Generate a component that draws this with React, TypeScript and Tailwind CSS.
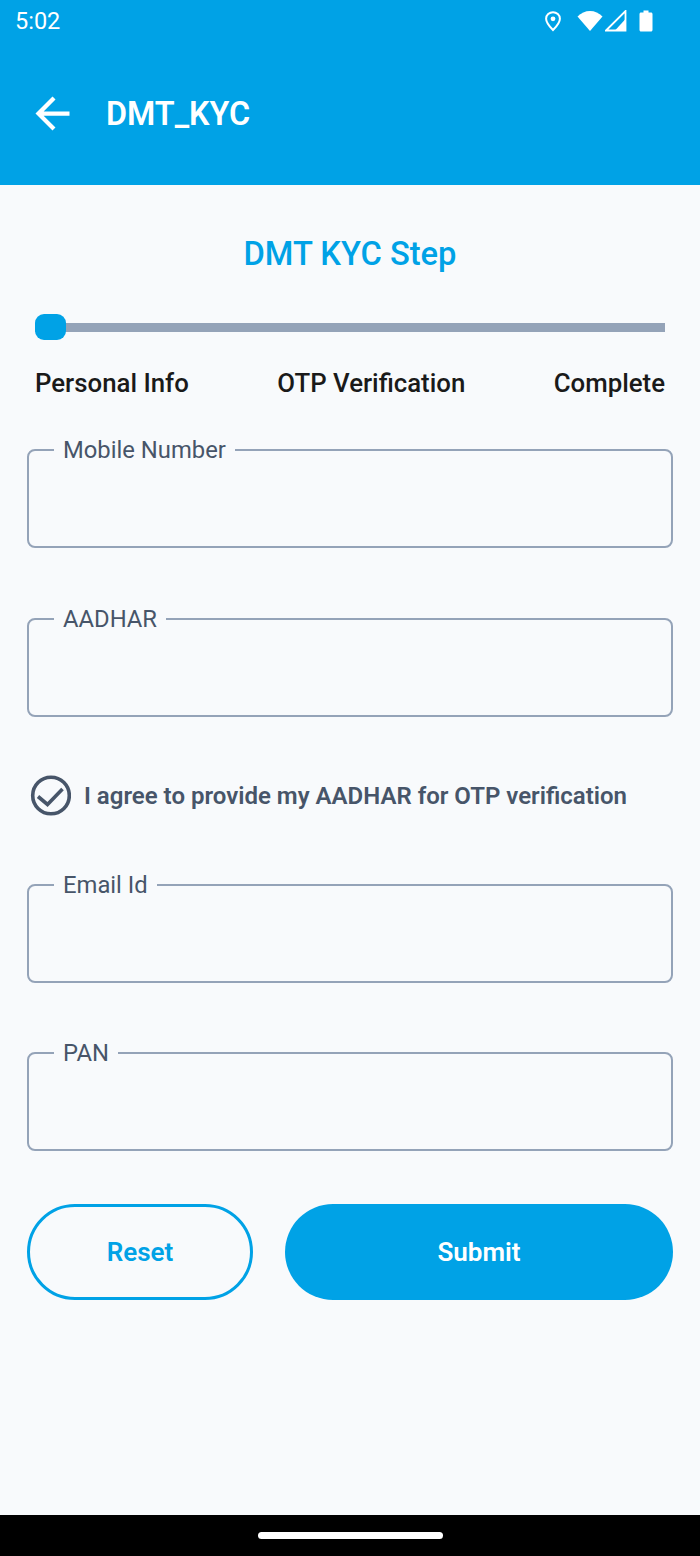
import { MdArrowBack } from 'react-icons/md';

function Field({ label }: { label: string }) {
  return (
    <div className="relative h-[99px] rounded-[8px] border-2 border-[#94a3b8]">
      <span className="absolute left-[25px] top-[-17px] bg-[#f8fafc] px-[9px] text-[23.800px] leading-[32px] text-[#475569]">
        {label}
      </span>
    </div>
  );
}

function StatusIcons() {
  return (
    <div className="flex items-center text-white">
      <svg width="20" height="24" viewBox="0 0 20 24" fill="none" className="mr-[14px]">
        <path d="M10 3.2c-3.6 0-6.900 2.800-6.900 6.500 0 4.400 6.900 11.300 6.900 11.300s6.900-6.900 6.900-11.300c0-3.700-3.300-6.500-6.900-6.500z" stroke="currentColor" strokeWidth="2" />
        <circle cx="10" cy="9.800" r="2.400" fill="currentColor" />
      </svg>
      <svg width="26" height="22" viewBox="0 0 26 22" fill="currentColor" className="mr-[2px]">
        <path d="M0.5 6.5C4 3 8.300 1 13 1s9 2 12.500 5.500L13 21z" />
      </svg>
      <svg width="22" height="22" viewBox="0 0 22 22" fill="none" className="mr-[12px]">
        <path d="M1 20.500L20.500 1v19.500z" stroke="currentColor" strokeWidth="1.800" />
        <path d="M10 20.500L20.500 9v11.500z" fill="currentColor" />
      </svg>
      <svg width="14" height="22" viewBox="0 0 14 22" fill="currentColor">
        <path d="M4.500 0.500h5v2h2.500c.8 0 1.500.7 1.500 1.500v16c0 .8-.7 1.500-1.500 1.500H2c-.8 0-1.500-.7-1.500-1.500V4c0-.8.7-1.500 1.500-1.500h2.500z" />
      </svg>
    </div>
  );
}

export default function App() {
  return (
    <div className="flex h-[1556px] w-[700px] flex-col overflow-hidden bg-[#f8fafc] font-['Roboto',sans-serif]">
      <header className="h-[185px] shrink-0 bg-[#00a2e6] text-white">
        <div className="flex h-[42px] items-center justify-between pl-[15px] pr-[47px]">
          <span className="text-[23.500px] leading-[42px]">5:02</span>
          <StatusIcons />
        </div>
        <div className="flex h-[143px] items-center pb-[1px] pl-[27px]">
          <MdArrowBack size={51} />
          <h1 className="ml-[28px] pt-[1px] text-[32.300px] font-semibold leading-[40px]">DMT_KYC</h1>
        </div>
      </header>

      <main className="flex-1 px-[27px]">
        <h2 className="mt-[49px] text-center text-[32.700px] font-medium leading-[40px] text-[#00a2e6]">DMT KYC Step</h2>

        <div className="relative mx-[8px] mt-[49px] h-[9px] bg-[#94a3b8]">
          <div className="absolute left-0 top-[-9px] h-[26px] w-[31px] rounded-[9px] bg-[#00a2e6]" />
        </div>

        <div className="mx-[8px] mt-[35px] flex justify-between text-[25.800px] font-medium leading-[32px] text-[#1a1a1a]">
          <span>Personal Info</span>
          <span>OTP Verification</span>
          <span>Complete</span>
        </div>

        <div className="mt-[50px] flex flex-col">
          <Field label="Mobile Number" />
          <div className="mt-[70px]">
            <Field label="AADHAR" />
          </div>

          <div className="ml-[3px] mt-[58px] flex items-center">
            <svg width="41" height="41" viewBox="0 0 41 41" fill="none" className="text-[#475569]">
              <circle cx="21" cy="20.500" r="18.300" stroke="currentColor" strokeWidth="3.600" />
              <path d="M8 21.500l9.500 8 15-15.500" stroke="currentColor" strokeWidth="3.600" />
            </svg>
            <span className="ml-[13px] text-[24px] font-semibold leading-[32px] text-[#475569]">
              I agree to provide my AADHAR for OTP verification
            </span>
          </div>

          <div className="mt-[68px]">
            <Field label="Email Id" />
          </div>
          <div className="mt-[69px]">
            <Field label="PAN" />
          </div>

          <div className="mt-[53px] flex gap-[32px]">
            <button className="h-[96px] w-[226px] rounded-full border-[3px] border-[#00a2e6] text-[26px] font-semibold text-[#00a2e6]">
              Reset
            </button>
            <button className="h-[96px] flex-1 rounded-full bg-[#00a2e6] text-[26px] font-semibold text-white">
              Submit
            </button>
          </div>
        </div>
      </main>

      <div className="flex h-[41px] shrink-0 items-center justify-center bg-black">
        <div className="h-[7px] w-[185px] rounded-full bg-white" />
      </div>
    </div>
  );
}
